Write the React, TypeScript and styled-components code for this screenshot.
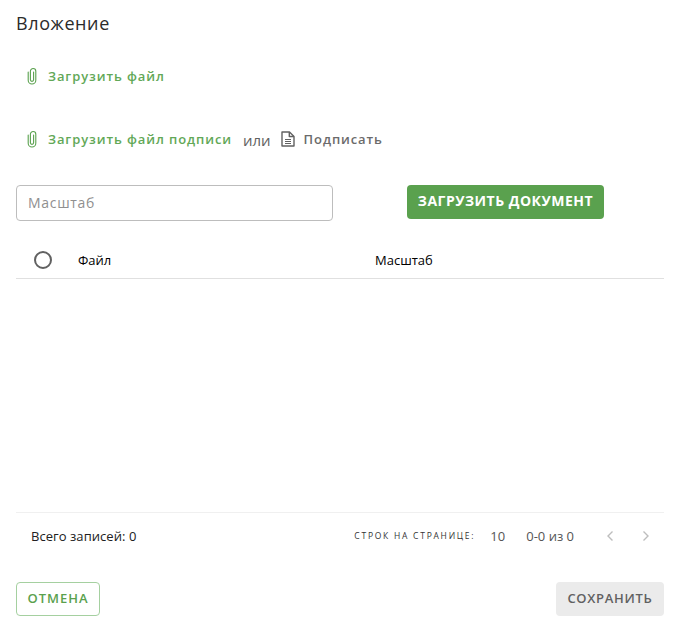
import React from "react";
import styled, { createGlobalStyle } from "styled-components";

const Global = createGlobalStyle`
  html, body { margin: 0; padding: 0; background: #fff; }
  body { font-family: "Open Sans", "Liberation Sans", sans-serif; }
`;

const Page = styled.div`
  width: 681px;
  height: 632px;
  box-sizing: border-box;
  padding: 11px 17px 0 16px;
  display: flex;
  flex-direction: column;
  overflow: hidden;
`;

const Title = styled.h2`
  margin: 0;
  font-size: 18px;
  line-height: 24px;
  font-weight: 500;
  letter-spacing: 0.6px;
  color: #2b2b2b;
`;

const LinkRow = styled.div<{ $top: number }>`
  display: flex;
  align-items: center;
  height: 24px;
  margin-top: ${(p) => p.$top}px;
  padding-left: 8px;
`;

const ActionLink = styled.span<{ $muted?: boolean }>`
  display: inline-flex;
  align-items: center;
  gap: 8px;
  font-size: 13px;
  font-weight: 600;
  letter-spacing: 0.9px;
  color: ${(p) => (p.$muted ? "#6b6b6b" : "#62a857")};
`;

const Or = styled.span`
  margin: 0 9px 0 11px;
  font-size: 15px;
  color: #616161;
  position: relative;
  top: 1px;
`;

const FormRow = styled.div`
  display: flex;
  align-items: flex-start;
  margin-top: 34px;
`;

const Input = styled.input`
  width: 317px;
  height: 36px;
  box-sizing: border-box;
  border: 1px solid #bdbdbd;
  border-radius: 4px;
  padding: 0 11px 2px;
  font-family: inherit;
  font-size: 14px;
  letter-spacing: 0.7px;
  color: #333;
  outline: none;
  &::placeholder { color: #8f8f8f; opacity: 1; }
`;

const UploadButton = styled.button`
  width: 197px;
  height: 34px;
  margin-left: 74px;
  border: none;
  border-radius: 4px;
  background: #5aa14e;
  color: #fff;
  font-family: inherit;
  font-size: 14px;
  font-weight: 700;
  letter-spacing: 0.5px;
  padding: 0 0 4px;
`;

const TableHead = styled.div`
  display: grid;
  grid-template-columns: 62px 297px 1fr;
  align-items: center;
  height: 37px;
  margin-top: 20px;
  border-bottom: 1px solid #e0e0e0;
`;

const RadioCell = styled.div`
  display: flex;
  padding-left: 18px;
`;

const Radio = styled.span`
  width: 18px;
  height: 18px;
  box-sizing: border-box;
  border: 2px solid #616161;
  border-radius: 50%;
`;

const HeadCell = styled.div`
  font-size: 13px;
  font-weight: 500;
  color: #000;
`;

const TableBody = styled.div`
  height: 233px;
`;

const Footer = styled.div`
  display: flex;
  align-items: center;
  height: 48px;
  border-top: 1px solid #f0f0f0;
  padding: 0 13px 2px 15px;
  box-sizing: border-box;
  font-size: 13px;
  color: #212121;
`;

const Total = styled.span`
  font-weight: 400;
  letter-spacing: 0.05px;
`;

const Pagination = styled.div`
  margin-left: auto;
  display: flex;
  align-items: center;
`;

const RowsLabel = styled.span`
  font-size: 8.5px;
  letter-spacing: 1.75px;
  font-weight: 500;
  color: #333;
`;

const PageValue = styled.span<{ $left: number }>`
  margin-left: ${(p) => p.$left}px;
  font-size: 13px;
  color: #555;
`;

const Chevron = styled.svg<{ $left: number }>`
  display: block;
  margin-left: ${(p) => p.$left}px;
`;

const Actions = styled.div`
  display: flex;
  justify-content: space-between;
  margin-top: 22px;
`;

const CancelButton = styled.button`
  width: 84px;
  height: 34px;
  box-sizing: border-box;
  background: #fff;
  border: 1px solid #a5d0a0;
  border-radius: 4px;
  color: #5aa14e;
  font-family: inherit;
  font-size: 13px;
  font-weight: 600;
  letter-spacing: 1px;
  padding: 0 0 2px;
`;

const SaveButton = styled.button`
  width: 108px;
  height: 34px;
  background: #ebebeb;
  border: none;
  border-radius: 4px;
  color: #616161;
  font-family: inherit;
  font-size: 13px;
  font-weight: 600;
  letter-spacing: 0.7px;
  padding: 0 0 2px;
`;

const Clip = () => (
  <svg width="16" height="18" viewBox="0 0 16 18" fill="none" stroke="#5aa14e" strokeWidth="1.1" strokeLinecap="round">
    <path d="M4.2 5v8.2a3.8 3.8 0 0 0 7.6 0V4.2a2.7 2.7 0 0 0-5.4 0v8.6a1.6 1.6 0 0 0 3.2 0V5" />
  </svg>
);

const Doc = () => (
  <svg width="16" height="18" viewBox="0 0 16 18" fill="none" stroke="#616161" strokeWidth="1.4" strokeLinejoin="round">
    <path d="M2 2h7.5L14 6.5V16H2z" />
    <path d="M9.3 2v4.5H14" />
    <path d="M5 9.5h6M5 11.5h6M5 13.5h6" strokeWidth="1.1" />
  </svg>
);

const ChevronIcon = ({ left, d }: { left: number; d: string }) => (
  <Chevron $left={left} width="10" height="12" viewBox="0 0 10 12" fill="none" stroke="#bdbdbd" strokeWidth="1.4">
    <path d={d} />
  </Chevron>
);

export default function App() {
  return (
    <Page>
      <Global />
      <Title>Вложение</Title>
      <LinkRow $top={29}>
        <ActionLink><Clip />Загрузить файл</ActionLink>
      </LinkRow>
      <LinkRow $top={39}>
        <ActionLink><Clip />Загрузить файл подписи</ActionLink>
        <Or>или</Or>
        <ActionLink $muted><Doc />Подписать</ActionLink>
      </LinkRow>
      <FormRow>
        <Input placeholder="Масштаб" />
        <UploadButton>ЗАГРУЗИТЬ ДОКУМЕНТ</UploadButton>
      </FormRow>
      <TableHead>
        <RadioCell><Radio /></RadioCell>
        <HeadCell>Файл</HeadCell>
        <HeadCell>Масштаб</HeadCell>
      </TableHead>
      <TableBody />
      <Footer>
        <Total>Всего записей: 0</Total>
        <Pagination>
          <RowsLabel>СТРОК НА СТРАНИЦЕ:</RowsLabel>
          <PageValue $left={15}>10</PageValue>
          <PageValue $left={21}>0-0 из 0</PageValue>
          <ChevronIcon left={31} d="M7.5 1.5 3 6l4.5 4.5" />
          <ChevronIcon left={26} d="M2.5 1.5 7 6l-4.5 4.5" />
        </Pagination>
      </Footer>
      <Actions>
        <CancelButton>ОТМЕНА</CancelButton>
        <SaveButton>СОХРАНИТЬ</SaveButton>
      </Actions>
    </Page>
  );
}
